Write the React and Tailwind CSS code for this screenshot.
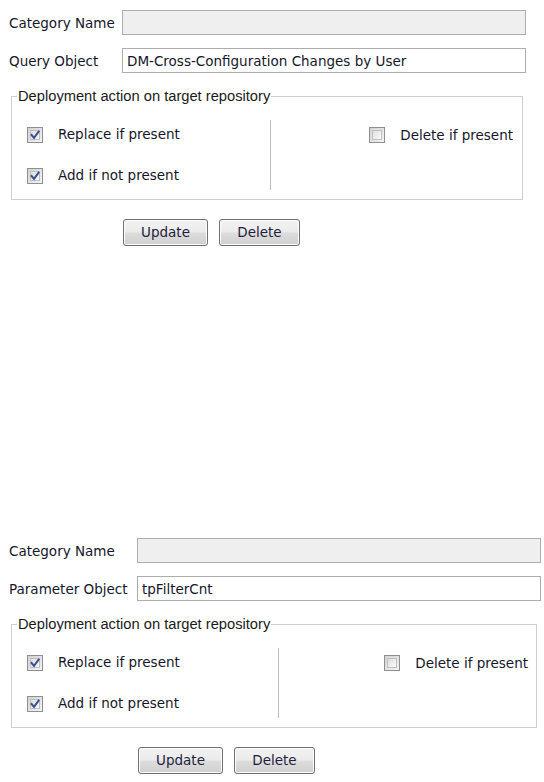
import React from "react";

const tahoma = { fontFamily: '"DejaVu Sans", "Liberation Sans", sans-serif' };

function CheckBox({ checked }) {
  return (
    <span className="relative inline-block h-[16px] w-[16px] shrink-0 border border-[#8e8f8f] bg-[linear-gradient(135deg,#d2d2d2,#f4f4f4)]">
      <span className="absolute inset-[2px] border border-[#c0c0c0] bg-[linear-gradient(135deg,#dedede,#fbfbfb)]" />
      {checked && (
        <svg className="absolute left-[1px] top-[1px]" width="12" height="12" viewBox="0 0 12 12">
          <path d="M2.6 6 L5 8.8 L9.6 2.6" fill="none" stroke="#3a4f93" strokeWidth="2" strokeLinecap="square" strokeLinejoin="miter" />
        </svg>
      )}
    </span>
  );
}

function Btn({ children, w }) {
  return (
    <button
      className={`h-[27px] ${w} rounded-[3px] border border-[#707070] bg-[linear-gradient(#f2f2f2_0%,#ebebeb_48%,#dddddd_52%,#cfcfcf_100%)] text-[13.5px] text-[#1e1e3c] shadow-[inset_0_0_0_1px_#fcfcfc]`}
      style={tahoma}
    >
      {children}
    </button>
  );
}

function Panel({ label2, value2, labelW, inputW, fsW, leftW, btnPl, rightPr }) {
  return (
    <div className="pl-[9px] text-[13.5px] text-[#16162a]" style={tahoma}>
      <div className="flex h-[25px] items-center">
        <div className={`${labelW} pt-[2px]`}>Category Name</div>
        <div className={`h-full ${inputW} border border-[#adadad] bg-[#efefef]`} />
      </div>
      <div className="mt-[13px] flex h-[25px] items-center">
        <div className={`${labelW} pt-[2px]`}>{label2}</div>
        <div className={`flex h-full ${inputW} items-center border border-[#adadad] bg-white pl-[4px] pt-[1px]`}>{value2}</div>
      </div>
      <fieldset className={`ml-[2px] mt-[16px] ${fsW} border border-[#cfcfcf] pb-[9px]`}>
        <legend
          className="ml-[5px] px-[1px] text-[14.7px] leading-[15px] text-[#1a1a1a]"
          style={{ fontFamily: '"Liberation Sans", Arial, sans-serif' }}
        >
          Deployment action on target repository
        </legend>
        <div className="mt-[16px] flex">
          <div className={`flex h-[70px] ${leftW} flex-col gap-[12px] border-r border-[#bcbcbc] pl-[15px]`}>
            <div className="flex h-[30px] items-center">
              <CheckBox checked />
              <span className="ml-[15px]">Replace if present</span>
            </div>
            <div className="flex h-[30px] items-center">
              <CheckBox checked />
              <span className="ml-[15px]">Add if not present</span>
            </div>
          </div>
          <div className={`flex h-[30px] flex-1 items-center justify-end ${rightPr}`}>
            <CheckBox />
            <span className="ml-[15px]">Delete if present</span>
          </div>
        </div>
      </fieldset>
      <div className={`mt-[19px] flex gap-[11px] ${btnPl}`}>
        <Btn w="w-[85px]">Update</Btn>
        <Btn w="w-[81px]">Delete</Btn>
      </div>
    </div>
  );
}

export default function App() {
  return (
    <div className="min-h-[782px] w-[544px] bg-white">
      <div className="pt-[10px]">
        <Panel
          label2="Query Object"
          value2="DM-Cross-Configuration Changes by User"
          labelW="w-[113px]"
          inputW="w-[404px]"
          fsW="w-[512px]"
          leftW="w-[259px]"
          btnPl="pl-[114px]"
          rightPr="pr-[9px]"
        />
      </div>
      <div className="pt-[292px]">
        <Panel
          label2="Parameter Object"
          value2="tpFilterCnt"
          labelW="w-[128px]"
          inputW="w-[404px]"
          fsW="w-[526px]"
          leftW="w-[267px]"
          btnPl="pl-[129px]"
          rightPr="pr-[8px]"
        />
      </div>
    </div>
  );
}
